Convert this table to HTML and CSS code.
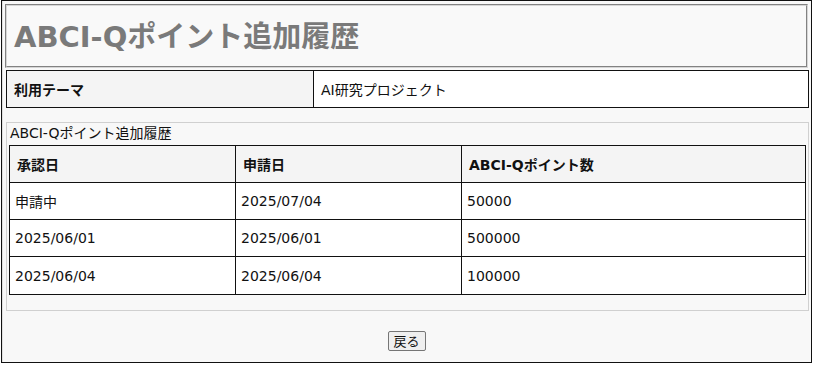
FILE: index.html
```html
<!DOCTYPE html>
<html lang="ja">
<head>
<meta charset="utf-8">
<title>ABCI-Qポイント追加履歴</title>
<link rel="stylesheet" href="styles.css">
</head>
<body>
<div class="page">
  <div class="title-box">
    <h1 class="title">ABCI-Qポイント追加履歴</h1>
  </div>
  <table class="info">
    <tr>
      <th class="info-th">利用テーマ</th>
      <td class="info-td">AI研究プロジェクト</td>
    </tr>
  </table>
  <div class="group">
    <div class="caption">ABCI-Qポイント追加履歴</div>
    <table class="list">
      <tr>
        <th class="c1">承認日</th>
        <th class="c2">申請日</th>
        <th class="c3">ABCI-Qポイント数</th>
      </tr>
      <tr>
        <td>申請中</td>
        <td>2025/07/04</td>
        <td>50000</td>
      </tr>
      <tr>
        <td>2025/06/01</td>
        <td>2025/06/01</td>
        <td>500000</td>
      </tr>
      <tr>
        <td>2025/06/04</td>
        <td>2025/06/04</td>
        <td>100000</td>
      </tr>
    </table>
  </div>
  <div class="actions">
    <button class="back" type="button">戻る</button>
  </div>
</div>
</body>
</html>
```
FILE: styles.css
```css
html, body {
  margin: 0;
  padding: 0;
  background: #ffffff;
}
body {
  font-family: "DejaVu Sans", "Noto Sans CJK JP", sans-serif;
  font-size: 14px;
  color: #111;
}
.page {
  box-sizing: border-box;
  width: 811px;
  height: 363px;
  margin-left: 1px;
  border: 1px solid #111;
  background: #f8f8f8;
  padding: 3px 0 0 2px;
  box-shadow: inset 1px 0 0 #e0e0e0;
}
.title-box {
  box-sizing: border-box;
  width: 803px;
  height: 64px;
  margin-left: 1px;
  border: 2px groove #d6d6d6;
  background: #f9f9f9;
  display: flex;
  align-items: center;
  padding-left: 7px;
}
.title {
  margin: 0;
  font-size: 29px;
  font-weight: bold;
  color: #7a7a7a;
  line-height: 1;
  padding-top: 2px;
}
.info {
  margin: 2px 0 0 2px;
  width: 803px;
  border-collapse: collapse;
  table-layout: fixed;
}
.info th, .info td {
  height: 36px;
  border: 1px solid #111;
  padding: 0 7px;
  text-align: left;
  vertical-align: middle;
  font-size: 14px;
}
.info-th {
  width: 292px;
  background: #f4f4f4;
  font-weight: bold;
}
.info-td {
  background: #ffffff;
  padding-left: 6px;
}
.group {
  box-sizing: border-box;
  width: 803px;
  margin: 14px 0 0 2px;
  border: 1px solid #d0d0d0;
  background: #f8f8f8;
  padding: 0 2px 15px 2px;
}
.caption {
  height: 22px;
  line-height: 20px;
  padding-left: 1px;
  font-size: 14px;
}
.list {
  width: 797px;
  border-collapse: collapse;
  table-layout: fixed;
}
.list th, .list td {
  height: 36px;
  border: 1px solid #111;
  text-align: left;
  vertical-align: middle;
  font-size: 14px;
  padding: 0 5px;
  background: #ffffff;
}
.list th {
  background: #f4f4f4;
  font-weight: bold;
  padding: 0 7px;
}
.list .c1, .list .c2 {
  width: 211px;
}
.list tr:last-child td {
  height: 37px;
}
.actions {
  display: flex;
  justify-content: center;
  padding-top: 20px;
  margin-left: -2px;
}
.back {
  box-sizing: border-box;
  width: 38px;
  height: 20px;
  padding: 0;
  border: 1px solid #767676;
  border-radius: 2px;
  background: #efefef;
  font-family: "Noto Sans CJK JP", sans-serif;
  font-size: 13px;
  color: #111;
  line-height: 18px;
}
```
